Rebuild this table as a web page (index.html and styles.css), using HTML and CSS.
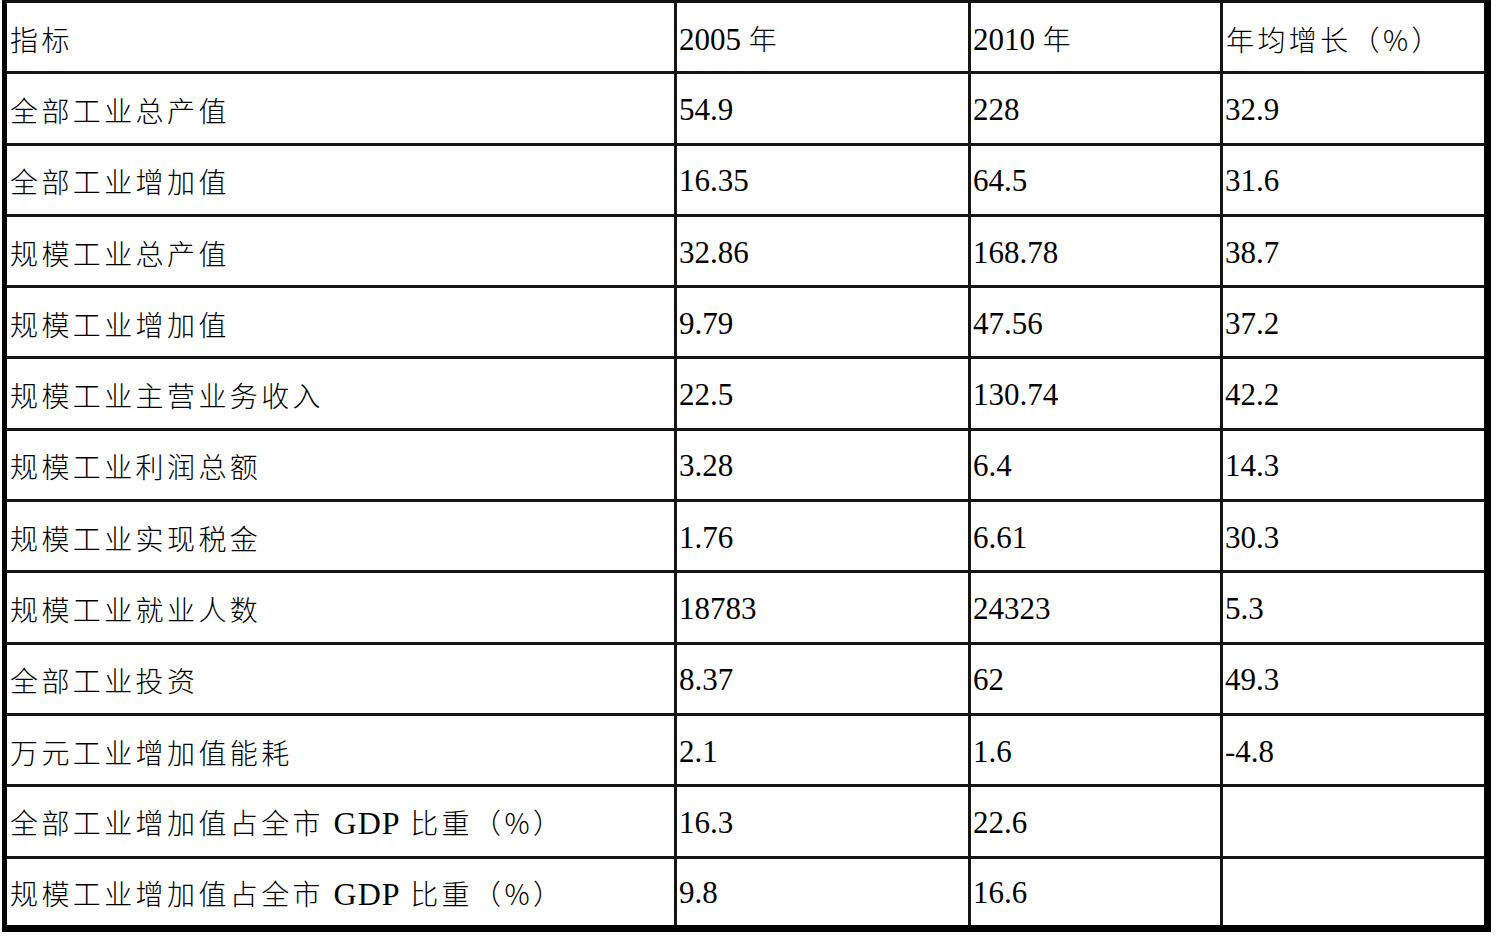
FILE: index.html
```html
<!DOCTYPE html>
<html lang="zh-CN">
<head>
<meta charset="utf-8">
<title>工业指标</title>
<link rel="stylesheet" href="styles.css">
</head>
<body>
<table class="data">
  <colgroup>
    <col class="c1"><col class="c2"><col class="c3"><col class="c4">
  </colgroup>
  <tr><td class="zh">指标</td><td>2005 <span class="zh">年</span></td><td>2010 <span class="zh">年</span></td><td class="zh">年均增长（%）</td></tr>
  <tr><td class="zh">全部工业总产值</td><td>54.9</td><td>228</td><td>32.9</td></tr>
  <tr><td class="zh">全部工业增加值</td><td>16.35</td><td>64.5</td><td>31.6</td></tr>
  <tr><td class="zh">规模工业总产值</td><td>32.86</td><td>168.78</td><td>38.7</td></tr>
  <tr><td class="zh">规模工业增加值</td><td>9.79</td><td>47.56</td><td>37.2</td></tr>
  <tr><td class="zh">规模工业主营业务收入</td><td>22.5</td><td>130.74</td><td>42.2</td></tr>
  <tr><td class="zh">规模工业利润总额</td><td>3.28</td><td>6.4</td><td>14.3</td></tr>
  <tr><td class="zh">规模工业实现税金</td><td>1.76</td><td>6.61</td><td>30.3</td></tr>
  <tr><td class="zh">规模工业就业人数</td><td>18783</td><td>24323</td><td>5.3</td></tr>
  <tr><td class="zh">全部工业投资</td><td>8.37</td><td>62</td><td>49.3</td></tr>
  <tr><td class="zh">万元工业增加值能耗</td><td>2.1</td><td>1.6</td><td>-4.8</td></tr>
  <tr><td class="zh">全部工业增加值占全市 <span class="lat">GDP</span> 比重（%）</td><td>16.3</td><td>22.6</td><td></td></tr>
  <tr class="last"><td class="zh">规模工业增加值占全市 <span class="lat">GDP</span> 比重（%）</td><td>9.8</td><td>16.6</td><td></td></tr>
</table>
</body>
</html>
```
FILE: styles.css
```css
html, body {
  margin: 0;
  padding: 0;
  background: #ffffff;
}
body {
  padding-left: 2px;
  font-family: "Liberation Serif", "Noto Sans CJK SC", serif;
  color: #000;
}
.data {
  border-collapse: separate;
  border-spacing: 0;
  table-layout: fixed;
  width: 1489px;
  border-left: 5px solid #000;
  border-right: 7px solid #000;
  border-top: 3px solid #111;
  border-bottom: 7px solid #000;
}
.c1 { width: 670px; }
.c2 { width: 294px; }
.c3 { width: 252px; }
.c4 { width: 261px; }
.data td {
  box-sizing: border-box;
  height: 71.3px;
  padding: 3px 0 0 2px;
  border-right: 3px solid #151515;
  border-bottom: 3px solid #151515;
  vertical-align: middle;
  font-family: "Liberation Serif", serif;
  font-size: 31px;
  line-height: 34px;
  white-space: nowrap;
  overflow: hidden;
}
.data td:last-child { border-right: none; }
.data tr.last td { border-bottom: none; height: 66px; }
.data td.zh { padding-left: 3px; }
.data .zh {
  font-family: "Noto Sans CJK SC", sans-serif;
  font-size: 28px;
  font-weight: 300;
  letter-spacing: 3.4px;
}
.data .lat {
  font-family: "Liberation Serif", serif;
  font-size: 32px;
  letter-spacing: 1px;
}
```
